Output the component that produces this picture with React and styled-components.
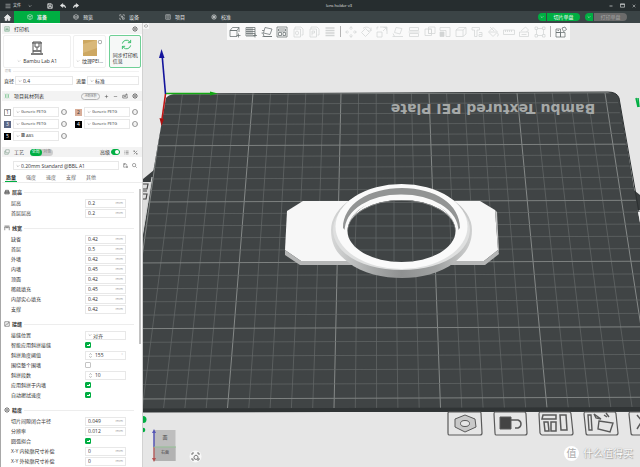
import React, { useState } from 'react';
import styled, { createGlobalStyle } from 'styled-components';

const GlobalStyle = createGlobalStyle`
  * {
    box-sizing: border-box;
  }

  body {
    margin: 0;
    font-family: "Open Sans", "Noto Sans CJK SC", sans-serif;
    font-size: 5px;
    line-height: 8px;
    color: #333;
    overflow: hidden;
  }

  button, input, select {
    font: inherit;
    color: inherit;
    margin: 0;
    padding: 0;
    border: none;
    background: none;
    outline: none;
  }
`;

const Window = styled.div`
  display: flex;
  flex-direction: column;
  height: 100vh;
  background: #e6e6e6;
`;

const TitleBar = styled.header`
  display: flex;
  justify-content: space-between;
  align-items: center;
  flex: 0 0 11px;
  background: #262d2f;
  color: #e4e6e6;
`;

const TitleActions = styled.div`
  display: flex;
  align-items: center;
  gap: ${props => props.$gap}px;
  padding: 0 ${props => props.$right || 0}px 0 ${props => props.$left || 0}px;
`;

const FileButton = styled.button`
  display: flex;
  align-items: center;
  gap: 2px;
  font-size: 4px;
`;

const WindowTitle = styled.h1`
  margin: 0;
  font-size: 4px;
  font-weight: 400;
`;

const IconButton = styled.button`
  display: flex;
  align-items: center;
  justify-content: center;
`;

const NavBar = styled.nav`
  display: flex;
  align-items: center;
  flex: 0 0 12px;
  background: #3b4446;
  color: #e6e8e8;
`;

const HomeButton = styled(IconButton)`
  width: 14px;
  height: 12px;
`;

const NavTab = styled.button`
  display: flex;
  align-items: center;
  justify-content: center;
  gap: 4px;
  width: 46px;
  height: 12px;
  font-weight: ${props => (props.$active ? 700 : 400)};
  background: ${props => (props.$active ? '#00ae42' : 'transparent')};
`;

const NavActions = styled.div`
  display: flex;
  gap: 5px;
  margin-left: auto;
  padding-right: 13px;
`;

const SplitButton = styled.div`
  display: flex;
  width: 42px;
  height: 8px;
  border-radius: 4px;
  overflow: hidden;
`;

const SplitArrow = styled(IconButton)`
  width: 9px;
  background: #00ae42;
  border-right: 1px solid #3b4446;
`;

const SplitMain = styled.button`
  flex: 1;
  background: ${props => (props.disabled ? '#6b6b6b' : '#00ae42')};
  color: ${props => (props.disabled ? '#a5a5a5' : '#fff')};
`;

const Body = styled.div`
  display: flex;
  flex: 1;
  min-height: 0;
`;

const SidePanel = styled.aside`
  flex: 0 0 143px;
  padding: 1px 0 0 1px;
  background: #fff;
  border-left: 1px solid #a8a8a8;
  border-right: 1px solid #d2d2d2;
  overflow: hidden;
`;

const SectionHeader = styled.div`
  display: flex;
  align-items: center;
  gap: 4px;
  height: 10px;
  padding: 0 4px 0 2px;
  background: #f3f3f3;
`;

const SectionTitle = styled.h2`
  margin: 0 ${props => (props.$tight ? '2px' : 'auto')} 0 0;
  font-size: 5px;
  font-weight: 400;
`;

const Cards = styled.div`
  display: flex;
  gap: 2px;
  padding: 1px 1px 0;
`;

const Card = styled.button`
  display: flex;
  flex-direction: column;
  align-items: center;
  justify-content: flex-end;
  gap: 1px;
  width: ${props => props.$width}px;
  height: 33px;
  padding-bottom: 2px;
  border: 1px solid #f0f0f0;
  border-radius: 2px;
`;

const SyncCard = styled(Card)`
  align-items: flex-start;
  margin-left: 1px;
  padding: 0 0 3px 3px;
  gap: 2px;
  line-height: 6px;
  text-align: left;
  background: #f6f8f7;
  border-color: #6fd096;

  svg {
    align-self: center;
  }
`;

const CardLabel = styled.span`
  display: flex;
  align-items: center;
  gap: 2px;
  white-space: nowrap;
`;

const NozzleCaption = styled.div`
  display: flex;
  align-items: center;
  gap: 2px;
  height: 6px;
  padding: 0 3px;
  font-size: 3px;
  color: #b4b4b4;

  &::after {
    content: '';
    flex: 1;
    height: 1px;
    background: #f2f2f2;
  }
`;

const NozzleRow = styled.div`
  display: flex;
  gap: 3px;
  padding: 2px 0 6px 2px;
`;

const NozzleField = styled.label`
  display: flex;
  align-items: center;
  gap: 1px;
`;

const SelectBox = styled.span`
  position: relative;
  display: flex;
  align-items: center;
  flex: 0 0 auto;
  width: ${props => props.$width}px;
  height: ${props => props.$height || 9}px;
  border: 1px solid #e8e8e8;
  background: #fff;

  svg {
    position: absolute;
    left: 2px;
    pointer-events: none;
  }

  select {
    appearance: none;
    width: 100%;
    height: 100%;
    padding-left: 7px;
    font-size: ${props => props.$size || 5}px;
  }
`;

const SmallPill = styled.button`
  width: 19px;
  height: 7px;
  border: 1px solid #b4b4b4;
  border-radius: 4px;
  font-size: 3px;
  line-height: 4px;
  color: #777;
`;

const Filaments = styled.div`
  display: grid;
  grid-template-columns: 71px 1fr;
  row-gap: 2px;
  padding: 6px 2px 6px;
`;

const Filament = styled.div`
  display: flex;
  align-items: center;
  gap: 2px;
  height: 10px;
`;

const Swatch = styled.button`
  width: 7px;
  height: 7px;
  line-height: 5px;
  border: 1px solid ${props => (props.$color === '#fff' ? '#999' : props.$color)};
  background: ${props => props.$color};
  color: ${props => props.$ink};
`;

const Segmented = styled.div`
  display: flex;
  width: 23px;
  height: 7px;
  margin-right: auto;
  border-radius: 4px;
  background: #cdcdcd;
`;

const Segment = styled.button`
  flex: 1;
  border-radius: 4px;
  font-size: 4px;
  line-height: 6px;
  background: ${props => (props.$active ? '#00ae42' : 'transparent')};
  color: ${props => (props.$active ? '#fff' : '#8a8a8a')};
`;

const SwitchLabel = styled.label`
  display: flex;
  align-items: center;
  gap: 1px;
`;

const Switch = styled.input`
  appearance: none;
  display: flex;
  justify-content: flex-end;
  width: 9px;
  height: 6px;
  border: 1px solid #00ae42;
  border-radius: 3px;
  background: #00ae42;

  &::after {
    content: '';
    width: 4px;
    height: 4px;
    border-radius: 2px;
    background: #fff;
  }
`;

const PresetRow = styled.div`
  display: flex;
  align-items: center;
  gap: 4px;
  padding: 4px 0 3px 11px;
`;

const Tabs = styled.div`
  display: flex;
  gap: 8px;
  padding-left: 3px;
  border-bottom: 1px solid #ececec;
`;

const Tab = styled.button`
  width: 12px;
  height: 9px;
  font-weight: ${props => (props.$active ? 700 : 400)};
  border-bottom: 1px solid ${props => (props.$active ? '#00ae42' : 'transparent')};
  color: ${props => (props.$active ? '#222' : '#666')};
`;

const Settings = styled.div`
  display: flex;
  flex-direction: column;
  gap: 4px;
  padding: 3px 2px 0 2px;
  margin-right: 1px;
  background: linear-gradient(#c2c2c2, #c2c2c2) right 6px / 2px 155px no-repeat;
`;

const Group = styled.fieldset`
  margin: 0;
  padding: 0 5px 0 0;
  border: none;
  min-width: 0;
`;

const GroupTitle = styled.legend`
  display: flex;
  align-items: center;
  gap: 2px;
  width: 100%;
  height: 12px;
  padding: 0;
  font-weight: 700;

  &::after {
    content: '';
    flex: 1;
    height: 1px;
    background: #ededed;
  }
`;

const SettingRow = styled.label`
  display: flex;
  align-items: center;
  height: 10px;
  padding-left: 7px;
`;

const SettingName = styled.span`
  width: 74px;
  white-space: nowrap;
`;

const ValueBox = styled.span`
  display: flex;
  align-items: center;
  width: 41px;
  height: 9px;
  padding: 0 2px;
  border: 1px solid #e8e8e8;

  svg {
    flex: none;
  }

  input {
    flex: 1;
    min-width: 0;
    height: 7px;
    padding-left: ${props => (props.$spin ? 2 : 0)}px;
  }
`;

const Unit = styled.span`
  font-size: 4px;
  color: #999;
`;

const Check = styled.input`
  appearance: none;
  width: 6px;
  height: 6px;
  border: 1px solid ${props => (props.checked ? '#00ae42' : '#c4c4c4')};
  border-radius: 1px;
  background: ${props => (props.checked ? '#00ae42' : '#fff')};
  background-image: ${props => (props.checked
    ? 'linear-gradient(#fff, #fff), linear-gradient(#fff, #fff)'
    : 'none')};
  background-size: 3px 1px, 1px 1px;
  background-position: 1px 2px, 3px 1px;
  background-repeat: no-repeat;
`;

const Viewport = styled.main`
  position: relative;
  display: flex;
  justify-content: center;
  align-items: flex-start;
  flex: 1;
  min-width: 0;
  padding-left: 14px;
`;

const Scene = styled.svg`
  position: absolute;
  inset: 0;
  width: 100%;
  height: 100%;
`;

const Toolbar = styled.div`
  position: relative;
  display: flex;
  align-items: center;
  justify-content: space-between;
  width: 343px;
  height: 17px;
  padding: 0 3px 0 2px;
  background: #fafafa;
`;

const Tool = styled(IconButton)`
  color: ${props => (props.disabled ? '#d3d5d5' : '#687072')};
`;

const ToolDivider = styled.span`
  width: 1px;
  height: 11px;
  background: #b4b4b4;
`;

const Watermark = styled.div`
  position: absolute;
  right: 7px;
  bottom: 6px;
  display: flex;
  align-items: center;
  gap: 4px;
  font-size: 10px;
  line-height: 15px;
  color: #fff;
  text-shadow: 0 0 1px #888, 1px 1px 1px #aaa;
`;

const WatermarkBadge = styled.span`
  width: 15px;
  height: 15px;
  border-radius: 50%;
  background: #fff;
  color: #aaa;
  text-align: center;
  text-shadow: none;
`;

const ICONS = {
  menu: <path d="M2 5h20M2 12h20M2 19h20" />,
  chevron: <path d="M4 8l8 8 8-8" />,
  save: <path d="M3 3h14l4 4v14H3zM7 3v6h9V3M7 21v-7h10v7" />,
  undo: <path d="M11 2L1 10l10 8v-5c5 0 9 1 11 7 1-9-4-13-11-13z" fill="currentColor" />,
  redo: <path d="M13 2l10 8-10 8v-5c-5 0-9 1-11 7-1-9 4-13 11-13z" fill="currentColor" />,
  home: <path d="M12 2L1 12h3v10h6v-7h4v7h6V12h3z" fill="currentColor" />,
  minimize: <path d="M3 12h18" />,
  maximize: <path d="M2 4h20v16H2zM2 7h20" />,
  close: <path d="M4 4l16 16M20 4L4 20" />,
  cube: <path d="M12 2l9 4v12l-9 4-9-4V6zM3 6l9 5 9-5M12 11v11" />,
  layers: <path d="M12 2l9 5v10l-9 5-9-5V7zM3 12l9 5 9-5M3 7l9 5 9-5" />,
  device: <path d="M3 9V3h6M15 3h6v6M3 15v6h5M9 8h5v5H9zM14 15h7v6h-7z" />,
  project: <path d="M3 3h18v18H3zM12 3v18M6 8h3M6 13h3M15 8h3M15 13h3" />,
  target: <><circle cx="12" cy="12" r="9" /><path d="M12 3v18M3 12h18M6 6l12 12M18 6L6 18" /></>,
  gear: <><circle cx="12" cy="12" r="8" /><circle cx="12" cy="12" r="3" /><path d="M12 1v4M12 19v4M1 12h4M19 12h4M4 4l3 3M17 17l3 3M20 4l-3 3M7 17l-3 3" /></>,
  printer: <path d="M3 3h18v18H3zM3 16h18M8 9h8v5H8z" />,
  spools: <path d="M4 3c3 3 3 15 0 18M10 3c-3 3-3 15 0 18M14 3c3 3 3 15 0 18M20 3c-3 3-3 15 0 18" />,
  plus: <path d="M12 4v16M4 12h16" />,
  minus: <path d="M4 12h16" />,
  sync: <path d="M3 9h13v-5h4v9M3 9v11h18v-7M7 14h9" />,
  more: <><circle cx="12" cy="12" r="10" /><path d="M6 12h2M11 12h2M16 12h2" /></>,
  process: <path d="M7 3h14v12M7 3v12h14M7 8H3v13h14v-5" />,
  list: <path d="M2 5h3M8 5h14M2 12h3M8 12h14M2 19h3M8 19h14" />,
  compare: <path d="M4 4l16 16M20 4l-6 6M4 20l6-6M4 9V4h5M20 15v5h-5" />,
  saveAs: <path d="M3 3h10l5 5v4M3 3v17h9M7 3v5h5M15 16h7v6h-7z" />,
  search: <><circle cx="10" cy="10" r="8" /><path d="M16 16l7 7" /></>,
  height: <><path d="M3 11h18v9H3zM6 11V5h12v6" fill="#bbb" /><path d="M3 15h18" /></>,
  width: <path d="M2 4h20M2 8h20M3 8v13M9 8v5M15 8v5M21 8v13" />,
  seam: <path d="M3 3h18v18H3zM6 18l5-7 3 2 5-8" />,
  spinner: <path d="M7 8l5-5 5 5M7 16l5 5 5-5" />,
  reload: <path d="M3 10a9 9 0 0 1 15-5l3 3M21 14a9 9 0 0 1-15 5l-3-3M21 2v6h-6M3 22v-6h6" />,
  addCube: <path d="M2 9l5-6h13l-4 6zM2 9h14v12H2zM20 3v9M19 15v8M15 19h8" />,
  addPlate: <path d="M2 3h18v17H2zM2 7h18M2 11h18M2 15h18M6 3v17M10 3v17M14 3v17M20 15v8M16 19h8" />,
  orient: <path d="M8 3l14 3-4 11L5 14zM2 9h4M1 14h3l2 7h16M3 21h19" />,
  arrange: <path d="M2 2h20v20H2zM5 6h14v4H5zM5 13h6v6H5zM14 13h5v6h-5z" />,
  boxO: <><path d="M6 6V2h12l4 4v12h-3M4 6h13v16H4z" /><ellipse cx="10" cy="14" rx="3" ry="4" /></>,
  boxP: <path d="M6 6V2h12l4 4v12h-3M4 6h13v16H4zM8 19v-9h5v4H8" />,
  rows: <path d="M3 4h18M3 9h18M3 14h18M3 19h18" strokeWidth="3" />,
  move: <path d="M12 8V2M9 5l3-4 3 4M12 16v6M9 19l3 4 3-4M8 12H2M5 9l-4 3 4 3M16 12h6M19 9l4 3-4 3" />,
  rotate: <path d="M3 13l8-8 8 8-8 8zM6 5c5-5 14-3 16 4M22 3v7h-6" />,
  scale: <path d="M2 12h10v10H2zM8 2h14v14M14 10l7-7M15 3h6v6M2 7V2h3" />,
  lay: <path d="M8 3l12 2-4 11L5 13zM1 21h21M2 15l3 6" />,
  cut: <path d="M3 3h18v6H3zM3 15h18v6H3zM1 12h22" />,
  bool: <path d="M2 6h13v13H2zM9 2h13v13H9zM9 6h6v9H9z" />,
  support: <><path d="M2 3h20v18h-8V9H2z" /><path d="M2 12h8v9H2z" fill="currentColor" /></>,
  cube3: <path d="M2 8l6-5h14v13l-6 5H2zM2 8h14v13M16 8l6-5" />,
  text: <path d="M2 3h15v5h-5v13H7V8H2zM16 13h6v8h-6v-4h6" />,
  paint: <path d="M3 12L12 3l9 9-9 9zM6 2l8 8M21 14c3 4 1 7-1 6M5 12h14" />,
  ruler: <path d="M1 8h22v9H1zM5 8v4M9 8v4M13 8v4M17 8v4" />,
  assembly: <path d="M3 12h18v9H3zM6 10l9-8 6 6-4 4M7 17h10" />,
  frame: <path d="M2 2h5v5H2zM17 2h5v5h-5zM2 17h5v5H2zM17 17h5v5h-5zM7 5h10M7 19h10M5 7v10M19 7v10" />,
  explode: <path d="M2 6h9v7H2zM2 13h9v9H2zM11 13h9v9h-9zM14 4l6-2 3 5-6 4zM5 9h3" />,
};

const Icon = ({ name, size = 6, color, weight = 2 }) => (
  <svg
    width={size}
    height={size}
    viewBox="0 0 24 24"
    fill="none"
    stroke={color || 'currentColor'}
    strokeWidth={weight}
  >
    {ICONS[name]}
  </svg>
);

const NAV_TABS = [
  ['cube', '准备'],
  ['layers', '预览'],
  ['device', '设备'],
  ['project', '项目'],
  ['target', '校准'],
];

const FILAMENTS = [
  { color: '#fff', ink: '#333', name: 'Generic PETG' },
  { color: '#d8ad98', ink: '#333', name: 'Generic PETG' },
  { color: '#5a6685', ink: '#fff', name: 'Generic PETG' },
  { color: '#000', ink: '#fff', name: 'Generic PETG' },
  { color: '#000', ink: '#fff', name: '▩ ABS' },
];

const GROUPS = [
  {
    title: '层高',
    icon: 'height',
    rows: [
      ['层高', '0.2', 'mm'],
      ['首层层高', '0.2', 'mm'],
    ],
  },
  {
    title: '线宽',
    icon: 'width',
    rows: [
      ['缺省', '0.42', 'mm'],
      ['首层', '0.5', 'mm'],
      ['外墙', '0.42', 'mm'],
      ['内墙', '0.45', 'mm'],
      ['顶面', '0.42', 'mm'],
      ['稀疏填充', '0.45', 'mm'],
      ['内部实心填充', '0.42', 'mm'],
      ['支撑', '0.42', 'mm'],
    ],
  },
  {
    title: '接缝',
    icon: 'seam',
    rows: [
      ['接缝位置', '对齐', 'select'],
      ['智能应用斜拼接缝', true],
      ['斜拼角度阈值', '155', '°', 'spin'],
      ['围绕整个围墙', false],
      ['斜拼段数', '10', '', 'spin'],
      ['应用斜拼于内墙', true],
      ['自动擦拭速度', true],
    ],
  },
  {
    title: '精度',
    icon: 'gear',
    rows: [
      ['切片间隙闭合半径', '0.049', 'mm'],
      ['分辨率', '0.012', 'mm'],
      ['圆弧拟合', true],
      ['X-Y 内轮廓尺寸补偿', '0', 'mm'],
      ['X-Y 外轮廓尺寸补偿', '0', 'mm'],
    ],
  },
];

const TOOLS = [
  'addCube', 'addPlate', 'orient', 'arrange', '-boxO', '-boxP', '-rows', '|',
  '-move', '-rotate', '-scale', '-lay', '-cut', '-bool', '-support', '-cube3',
  '-text', '-paint', '-ruler', '-assembly', '-frame', '|', 'explode',
];

const Select = ({ width, value, label, height, size }) => (
  <SelectBox $width={width} $height={height} $size={size}>
    <Icon name="chevron" size={4} color="#888" weight={3} />
    <select aria-label={label} defaultValue={value}>
      <option>{value}</option>
    </select>
  </SelectBox>
);

const Setting = ({ row }) => {
  const [name, initial, unit, spin] = row;
  const [value, setValue] = useState(initial);

  let control;
  if (typeof value === 'boolean') {
    control = <Check type="checkbox" checked={value} onChange={e => setValue(e.target.checked)} />;
  } else if (unit === 'select') {
    control = <Select width={41} value={value} label={name} />;
  } else {
    control = (
      <ValueBox $spin={spin}>
        {spin && <Icon name="spinner" size={5} color="#777" weight={3} />}
        <input type="text" value={value} onChange={e => setValue(e.target.value)} />
        <Unit>{unit}</Unit>
      </ValueBox>
    );
  }

  return (
    <SettingRow>
      <SettingName>{name}</SettingName>
      {control}
    </SettingRow>
  );
};

// grid lines of the build plate, every fifth one is brighter
const columns = Array.from({ length: 27 }, (_, i) => i - 5);
const gridRows = Array.from({ length: 26 }, (_, i) => i);
const rowY = i => 94.5 + 9.82 * i + 0.0946 * i * i;

const Plate = () => (
  <g>
    <path d="M138 183L154 170L166 160V240L138 260Z" fill="#3a3e3f" />
    <path d="M138 182H152L138 262Z" fill="#dedede" />
    <path d="M143 184h5l-1 5h-4M143 191h4M143 194h4l-1 5h-3" fill="none" stroke="#444" strokeWidth="1.2" />
    <path d="M630 187l10 8v15h-8z" fill="#3a3e3f" />
    <path d="M166 98Q167 94 174 94L608 92Q617 92 619 98L636 200L674 412H118L150 190Z" fill="#404445" />
    <path d="M166 98Q167 94 174 94L608 92Q617 92 619 98L674 412" fill="none" stroke="#2c3031" />
    <clipPath id="plate">
      <path d="M166 98L174 94L608 92L617 97L674 408H118L150 190Z" />
    </clipPath>
    <g clipPath="url(#plate)">
      {columns.map(i => (
        <path
          key={i}
          d={`M${253 + 17.6 * i} 93L${227.5 + 21.3 * i} 408`}
          stroke={i % 5 === 0 ? '#858988' : '#666a6a'}
          strokeWidth={i % 5 === 0 ? 1 : 0.7}
        />
      ))}
      {gridRows.map(i => (
        <path
          key={i}
          d={`M100 ${rowY(i)}L680 ${rowY(i) - 2}`}
          stroke={i % 5 === 0 ? '#7e8281' : '#646868'}
          strokeWidth={i % 5 === 0 ? 1 : 0.7}
        />
      ))}
    </g>
    <path d="M130 408.5L680 407V411L130 412.5Z" fill="#303435" />
    <text
      transform="rotate(180 493 108)"
      x="493"
      y="112"
      textAnchor="middle"
      fontFamily="DejaVu Sans"
      fontSize="14"
      fontWeight="700"
      fill="#a6a9a8"
    >
      Bambu Textured PEI Plate
    </text>
    <path d="M152 177L122 360" stroke="#d0d2d2" strokeWidth="1" />
    <path d="M638 212L644 245V212Z" fill="#f2f2f2" />
    <path d="M166 98Q168 95 174 94H166Z" fill="#f2f2f2" />
  </g>
);

const Axes = () => (
  <g>
    <path d="M165.5 94L162 54" stroke="#14149c" strokeWidth="1.6" />
    <path d="M161.5 49L159 58H164.5Z" fill="#14149c" />
    <path d="M166 93.5H212" stroke="#13a813" strokeWidth="1.6" />
    <path d="M218 93.5L210 91.5V95.5Z" fill="#13a813" />
    <path d="M165.5 94L162 119" stroke="#c01414" strokeWidth="1.6" />
    <path d="M161.5 126L159.5 118L164 119Z" fill="#a81010" />
  </g>
);

const Model = () => (
  <g>
    <defs>
      <linearGradient id="side">
        <stop offset="0" stopColor="#d6d7d7" />
        <stop offset="0.3" stopColor="#a6a8a8" />
        <stop offset="0.5" stopColor="#8f9191" />
        <stop offset="0.75" stopColor="#a0a2a2" />
        <stop offset="1" stopColor="#cfd0d0" />
      </linearGradient>
      <clipPath id="bore">
        <ellipse cx="401.5" cy="231" rx="54" ry="31" />
      </clipPath>
    </defs>
    <path d="M287 211L303 201H480L495 210L498 250L484 261H301L285 250Z" fill="#f7f7f7" />
    <path d="M285 250L301 261H484L498 250L499 254L485 265H300L285 255Z" fill="#b5b6b6" />
    <path d="M495 210L498 250L499 253L497 212Z" fill="#c4c5c5" />
    <path d="M331 230a70.5 44 0 0 1 141 0C472 248 462 256 455 262C440 274 420 278 402 278S362 274 348 262C340 256 331 248 331 230Z" fill="url(#side)" />
    <path d="M333 230a68.5 42 0 0 1 137 0C469 256 436 270 401.5 270S334 256 333 230Z" fill="#dfe0e0" />
    <ellipse cx="401.5" cy="226.5" rx="66" ry="42.5" fill="#fafafa" />
    <path d="M343 228C343 204 369 188 402 188S460 204 460 228L456 232C455 211 429 196 401 196S349 211 347 232Z" fill="#929494" />
    <path d="M346 232C346 210 371 196 401 196S457 210 457 232" fill="none" stroke="#fafafa" strokeWidth="3" />
    <ellipse cx="401.5" cy="231" rx="54" ry="31" fill="#404445" />
    <g clipPath="url(#bore)">
      <path d="M357 200L354 270M376 195V270M394 195V270M412 195L413 270M431 195L433 270M449 200L452 270" stroke="#666a6a" strokeWidth="0.7" />
      <path d="M340 202.5H460M340 214H460M340 226H460M340 238H460M340 250H460" stroke="#666a6a" strokeWidth="0.7" />
      <path d="M347 231A54 31 0 0 1 456 231" fill="none" stroke="#8a8c8c" strokeWidth="2" />
    </g>
  </g>
);

const PlateButtons = () => (
  <g fill="none" stroke="#5a5a5a">
    <path d="M449 412h31q1 0 1 1l1 20q0 2-2 2h-31q-1 0-1-2v-20q0-1 1-1zM495 412h29q2 0 2 2l1 19q0 2-2 2h-29q-1 0-1-2l-1-19q0-2 1-2zM540 412h29q2 0 2 2l2 19q0 2-2 2h-29q-1 0-2-2l-1-19q0-2 1-2zM585 412h29q2 0 2 2l2 19q0 2-2 2h-28q-2 0-2-2l-2-19q0-2 1-2zM641 412h-11q-1 0-1 2l2 19q0 2 2 2h9" strokeWidth="1.2" />
    <path d="M465 415l10 4 1 8-11 5-10-5v-8z" fill="#c8c8c8" />
    <ellipse cx="465" cy="423.5" rx="4.5" ry="3" fill="#e6e6e6" />
    <path d="M500 417h11v12h-11z" fill="#444" />
    <path d="M511 420h7q3 1 3 4t-3 4h-3" strokeWidth="1.5" />
    <path d="M543 415h13v4h-14zM560 415h6l1 15h-6zM544 422h4l1 9h-4zM551 422h5v9h-5z" strokeWidth="1.5" />
    <path d="M588 415h3l1 15h-3zM599 421l14 2-3 9-12-3z" strokeWidth="1.4" />
    <path d="M594 414l7 5-5-1zM604 415l3 2M606 413l3 4" strokeWidth="1.4" />
    <path d="M637 415l5 6-5 8" strokeWidth="1.5" />
  </g>
);

const ViewCube = () => (
  <g>
    <circle cx="143" cy="419.5" r="3.5" fill="#00ae42" />
    <circle cx="143" cy="430" r="2.3" fill="#00ae42" />
    <path d="M154 430H175.5V461H154Z" fill="#bebebe" />
    <path d="M154 447H175.5V461H154Z" fill="#b2b2b2" />
    <path d="M154 447V432" stroke="#5555b5" strokeWidth="1.5" />
    <path d="M154 429l-2 4h4z" fill="#5555b5" />
    <path d="M154 447V459" stroke="#b56060" strokeWidth="1.5" />
    <path d="M154 462l-2-4h4z" fill="#b55050" />
    <path d="M154 447H176" stroke="#93c193" />
    <text x="165" y="439" textAnchor="middle" fontSize="5" fill="#444">面</text>
    <text x="165" y="454" textAnchor="middle" fontSize="4" fill="#444">右面</text>
    <circle cx="195.5" cy="456.5" r="6" fill="#f8f8f8" />
    <path d="M192 455v-2h2M197 453h2v2M199 458v2h-2M194 460h-2v-2M194 456.5l2-1.5 2 1.5v2l-2 1-2-1z" fill="none" stroke="#555" strokeWidth="0.8" />
  </g>
);

const App = () => {
  const [navTab, setNavTab] = useState('准备');
  const [tab, setTab] = useState('质量');

  return (
    <Window>
      <GlobalStyle />
      <TitleBar>
        <TitleActions $gap={7} $left={5}>
          <FileButton><Icon name="menu" />文件</FileButton>
          <IconButton aria-label="展开"><Icon name="chevron" size={4} weight={3} /></IconButton>
          <TitleActions $gap={7} $left={8}>
            <IconButton aria-label="保存"><Icon name="save" weight={3} /></IconButton>
            <IconButton aria-label="撤销"><Icon name="undo" /></IconButton>
            <IconButton aria-label="重做"><Icon name="redo" /></IconButton>
          </TitleActions>
        </TitleActions>
        <WindowTitle>lens holder v3</WindowTitle>
        <TitleActions $gap={7} $left={10} $right={4}>
          <IconButton aria-label="最小化"><Icon name="minimize" size={4} weight={4} /></IconButton>
          <IconButton aria-label="最大化"><Icon name="maximize" size={5} weight={3} /></IconButton>
          <IconButton aria-label="关闭"><Icon name="close" size={4} weight={3} /></IconButton>
        </TitleActions>
      </TitleBar>

      <NavBar>
        <HomeButton aria-label="主页"><Icon name="home" size={7} color="#fff" /></HomeButton>
        {NAV_TABS.map(([icon, name]) => (
          <NavTab key={name} $active={navTab === name} onClick={() => setNavTab(name)}>
            <Icon name={icon} />
            {name}
          </NavTab>
        ))}
        <NavActions>
          <SplitButton>
            <SplitArrow aria-label="切片选项"><Icon name="chevron" size={4} weight={3} /></SplitArrow>
            <SplitMain>切片单盘</SplitMain>
          </SplitButton>
          <SplitButton>
            <SplitArrow aria-label="打印选项"><Icon name="chevron" size={4} weight={3} /></SplitArrow>
            <SplitMain disabled>打印单盘</SplitMain>
          </SplitButton>
        </NavActions>
      </NavBar>

      <Body>
        <SidePanel>
          <SectionHeader>
            <Icon name="printer" color="#5a9a70" />
            <SectionTitle>打印机</SectionTitle>
            <IconButton aria-label="打印机设置"><Icon name="gear" /></IconButton>
          </SectionHeader>
          <Cards>
            <Card $width={70}>
              <svg width="14" height="16" viewBox="0 0 14 16" fill="none" stroke="#555">
                <path d="M3 13V2h8v11M2 3h10M5 3v4h4V3M7 7v3" />
                <path d="M3 11h8M1 14h12" strokeWidth="1.5" />
              </svg>
              <CardLabel><Icon name="chevron" size={4} color="#888" />Bambu Lab A1</CardLabel>
            </Card>
            <Card $width={33}>
              <svg width="24" height="16" viewBox="0 0 24 16">
                <path d="M5 0h14v16H5z" fill="#cda862" />
                <path d="M5 4l14-4v8L5 13z" fill="#d9b879" />
                <circle cx="22" cy="2" r="1.8" fill="none" stroke="#888" strokeWidth="0.7" />
              </svg>
              <CardLabel><Icon name="chevron" size={4} color="#888" />纹理PEI...</CardLabel>
            </Card>
            <SyncCard $width={33}>
              <Icon name="reload" size={11} color="#2eb863" />
              <span>同步打印机<br />信息</span>
            </SyncCard>
          </Cards>
          <NozzleCaption>喷嘴</NozzleCaption>
          <NozzleRow>
            <NozzleField>直径<Select width={58} value="0.4" label="直径" /></NozzleField>
            <NozzleField>流量<Select width={52} value="标准" label="流量" /></NozzleField>
          </NozzleRow>

          <SectionHeader>
            <Icon name="spools" color="#5cb878" />
            <SectionTitle>项目耗材列表</SectionTitle>
            <SmallPill>冲刷体积</SmallPill>
            <IconButton aria-label="添加耗材"><Icon name="plus" size={5} /></IconButton>
            <IconButton aria-label="删除耗材"><Icon name="minus" size={5} /></IconButton>
            <IconButton aria-label="同步耗材"><Icon name="sync" /></IconButton>
            <IconButton aria-label="耗材设置"><Icon name="gear" /></IconButton>
          </SectionHeader>
          <Filaments>
            {FILAMENTS.map((item, i) => (
              <Filament key={i}>
                <Swatch $color={item.color} $ink={item.ink}>{i + 1}</Swatch>
                <Select width={46} height={10} size={4} value={item.name} label={`耗材 ${i + 1}`} />
                <IconButton aria-label="更多"><Icon name="more" /></IconButton>
              </Filament>
            ))}
          </Filaments>

          <SectionHeader>
            <Icon name="process" color="#6f8f7c" />
            <SectionTitle $tight>工艺</SectionTitle>
            <Segmented>
              <Segment $active>全局</Segment>
              <Segment>对象</Segment>
            </Segmented>
            <SwitchLabel>高级<Switch type="checkbox" defaultChecked /></SwitchLabel>
            <IconButton aria-label="参数表"><Icon name="list" size={5} /></IconButton>
            <IconButton aria-label="对比"><Icon name="compare" size={5} /></IconButton>
          </SectionHeader>
          <PresetRow>
            <Select width={106} value="0.20mm Standard @BBL A1" label="工艺预设" />
            <IconButton aria-label="另存"><Icon name="saveAs" size={5} /></IconButton>
            <IconButton aria-label="搜索"><Icon name="search" size={5} /></IconButton>
          </PresetRow>
          <Tabs>
            {['质量', '强度', '速度', '支撑', '其他'].map(name => (
              <Tab key={name} $active={tab === name} onClick={() => setTab(name)}>{name}</Tab>
            ))}
          </Tabs>
          <Settings>
            {GROUPS.map(group => (
              <Group key={group.title}>
                <GroupTitle><Icon name={group.icon} />{group.title}</GroupTitle>
                {group.rows.map(row => <Setting key={row[0]} row={row} />)}
              </Group>
            ))}
          </Settings>
        </SidePanel>

        <Viewport>
          <Scene viewBox="143 23 497 444" preserveAspectRatio="xMidYMid slice">
            <Plate />
            <Axes />
            <Model />
            <PlateButtons />
            <ViewCube />
            <path d="M143 23h6v6h-6z" fill="#f4f4f4" />
            <path d="M144 26q2.5-3 4 0q-2 3-4 0" fill="none" stroke="#888" strokeWidth="0.6" />
            <path d="M636 98l2 9M638 98l1 9" stroke="#00ae42" strokeWidth="1.5" />
          </Scene>
          <Toolbar>
            {TOOLS.map((name, i) => {
              if (name === '|') return <ToolDivider key={i} />;
              const disabled = name.startsWith('-');
              const icon = name.replace('-', '');
              return (
                <Tool key={i} disabled={disabled} aria-label={icon}>
                  <Icon name={icon} size={12} weight={1.5} />
                </Tool>
              );
            })}
          </Toolbar>
          <Watermark>
            <WatermarkBadge>值</WatermarkBadge>
            什么值得买
          </Watermark>
        </Viewport>
      </Body>
    </Window>
  );
};

export default App;
